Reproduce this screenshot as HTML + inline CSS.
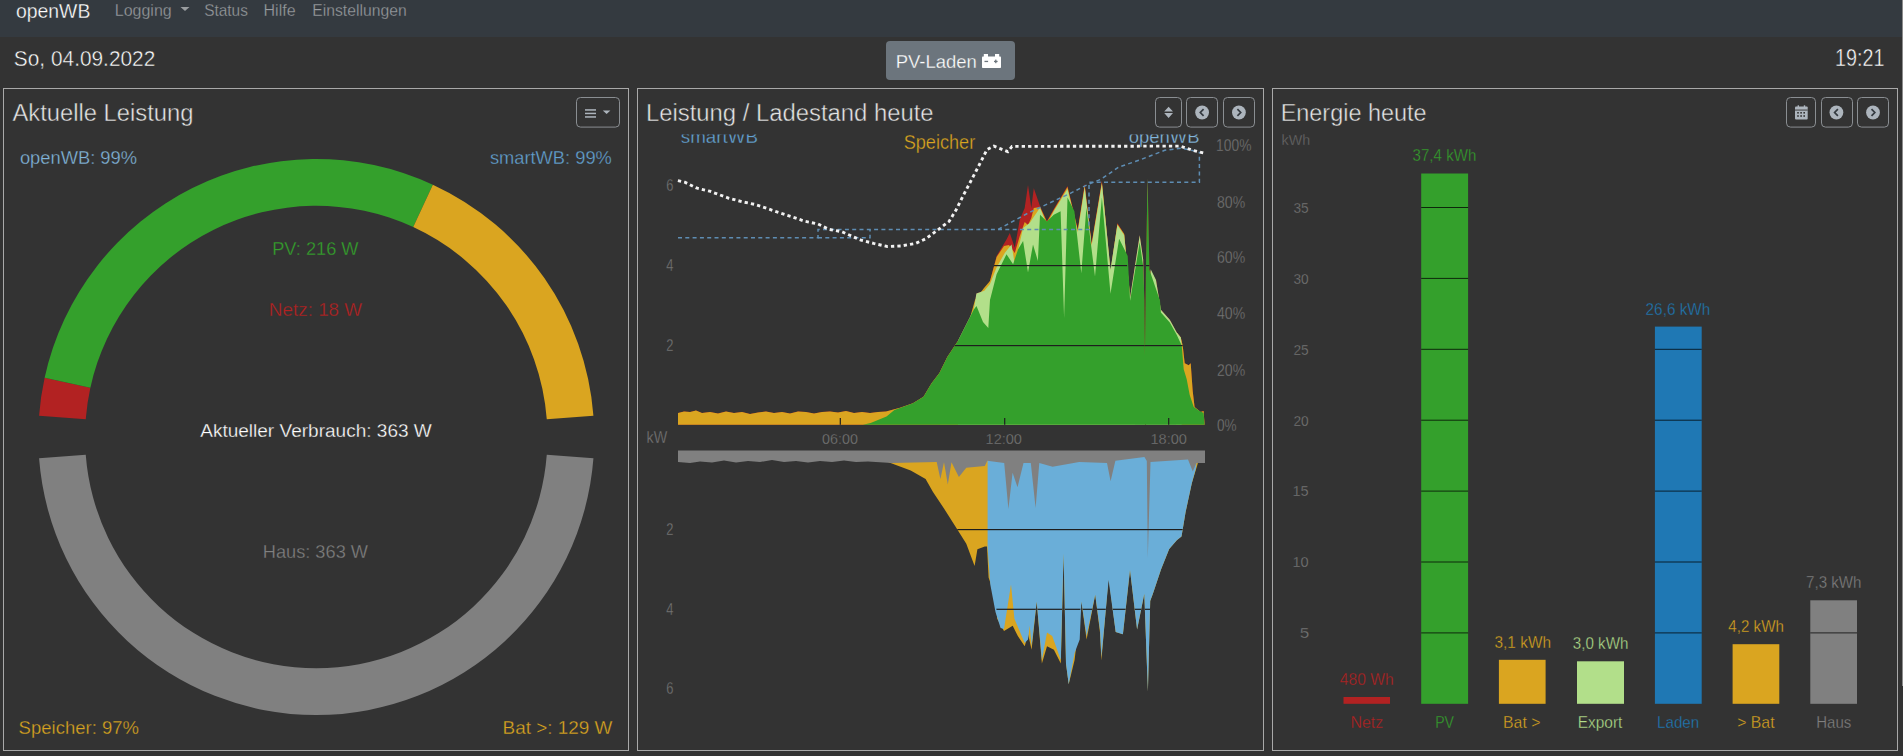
<!DOCTYPE html>
<html><head><meta charset="utf-8"><title>openWB</title>
<style>
html,body{margin:0;padding:0;background:#333333;width:1903px;height:756px;overflow:hidden;font-family:"Liberation Sans",sans-serif;}
svg{position:absolute;left:0;top:0;display:block}
text{font-family:"Liberation Sans",sans-serif;white-space:pre}
</style></head><body>
<svg width="1903" height="756" viewBox="0 0 1903 756">
<defs><clipPath id="c19"><rect x="0" y="134.5" width="1903" height="40"/></clipPath>
<clipPath id="c20"><rect x="0" y="134.5" width="1903" height="40"/></clipPath></defs>
<rect x="0" y="0" width="1903" height="756" fill="#333333"/>
<rect x="0" y="0" width="1903" height="37" fill="#343a40"/>
<path d="M180.5,6.9 L189.5,6.9 L185,11.1 Z" fill="#9a9da0"/>
<rect x="886" y="41" width="129" height="39" rx="4" fill="#6c757d"/>
<g fill="#ffffff"><rect x="982" y="56.6" width="19" height="11.4" rx="0.8"/><rect x="983.8" y="54" width="4.2" height="3"/><rect x="995" y="54" width="4.2" height="3"/></g><g fill="#6c757d"><rect x="984.5" y="60.8" width="3.6" height="1.3"/><rect x="994" y="60.8" width="3.6" height="1.3"/><rect x="995.15" y="59.6" width="1.3" height="3.6"/></g>
<rect x="3.5" y="88.5" width="625" height="662" fill="none" stroke="#a9a9a9" stroke-width="1"/>
<rect x="637.5" y="88.5" width="626" height="662" fill="none" stroke="#a9a9a9" stroke-width="1"/>
<rect x="1272.5" y="88.5" width="625" height="662" fill="none" stroke="#a9a9a9" stroke-width="1"/>
<rect x="1902" y="0" width="1" height="686" fill="#8c8c8c"/>
<path d="M39.07,415.67 A278,278 0 0 1 44.63,377.78 L90.36,387.75 A231.2,231.2 0 0 0 85.73,419.26 Z" fill="#b22222"/>
<path d="M44.63,377.78 A278,278 0 0 1 432.86,184.64 L413.23,227.12 A231.2,231.2 0 0 0 90.36,387.75 Z" fill="#34a02c"/>
<path d="M432.86,184.64 A278,278 0 0 1 593.43,415.67 L546.77,419.26 A231.2,231.2 0 0 0 413.23,227.12 Z" fill="#daa520"/>
<path d="M39.07,458.33 A278,278 0 0 0 593.43,458.33 L546.77,454.74 A231.2,231.2 0 0 1 85.73,454.74 Z" fill="#808080"/>
<clipPath id="envclip"><polygon points="678.0,424.8 678.0,413.0 684.0,411.5 690.0,412.0 696.0,410.5 702.0,413.0 710.0,412.0 718.0,413.5 726.0,411.5 734.0,413.0 742.0,412.0 750.0,414.0 758.0,412.5 766.0,411.5 774.0,413.0 782.0,412.0 790.0,413.5 798.0,411.5 806.0,412.0 814.0,413.5 822.0,412.0 830.0,411.5 838.0,412.5 846.0,411.0 854.0,413.0 862.0,412.0 870.0,413.0 878.0,412.0 886.0,411.5 900.0,407.8 912.9,403.3 923.5,396.7 931.4,383.4 939.4,372.9 947.3,357.0 957.9,341.1 973.8,309.4 976.4,293.5 984.3,290.8 990.0,280.8 996.6,256.0 1006.5,239.5 1009.8,232.9 1014.8,247.7 1019.8,219.6 1024.7,208.0 1028.0,184.9 1031.3,208.0 1033.8,188.2 1040.0,206.0 1046.9,221.0 1053.8,209.0 1067.5,186.0 1077.8,229.0 1084.7,183.5 1091.6,243.0 1101.9,180.5 1110.5,273.0 1117.4,223.0 1124.2,234.0 1130.1,297.2 1139.7,235.3 1143.2,259.4 1144.4,300.0 1144.9,355.7 1145.6,300.0 1145.9,269.7 1147.6,178.6 1149.4,269.7 1151.0,272.0 1156.0,280.0 1160.9,309.8 1169.8,319.7 1176.8,332.6 1180.8,337.5 1182.7,345.5 1184.7,363.3 1188.7,365.3 1190.7,363.3 1192.7,391.1 1194.6,407.0 1200.6,412.0 1203.6,411.0 1204.6,424.8"/></clipPath>
<clipPath id="lenvclip"><polygon points="678.0,450.5 678.0,462.0 690.0,463.0 700.0,461.5 712.0,462.5 724.0,460.5 736.0,462.5 748.0,461.0 760.0,462.0 772.0,460.0 784.0,462.0 796.0,461.0 808.0,462.5 820.0,461.0 832.0,462.0 844.0,460.5 856.0,462.0 868.0,461.5 888.5,462.2 910.7,470.6 925.6,478.9 933.0,491.9 944.0,508.5 957.0,528.9 966.3,543.7 974.6,565.9 977.4,549.3 984.8,546.5 987.0,546.6 988.6,577.6 995.5,598.2 997.2,618.8 1004.0,630.9 1012.7,625.7 1017.8,636.0 1024.7,646.3 1028.1,634.3 1031.6,649.8 1036.7,601.6 1041.9,663.5 1047.0,646.3 1053.9,649.8 1060.8,663.5 1063.6,553.5 1066.0,663.5 1068.7,684.2 1074.6,660.1 1081.4,601.6 1086.6,639.5 1095.2,594.7 1100.0,632.6 1101.4,660.5 1108.6,577.1 1115.7,631.9 1122.9,634.3 1130.0,570.0 1137.1,629.5 1144.3,593.8 1147.9,691.4 1150.2,601.0 1152.8,594.0 1161.0,569.5 1169.2,549.0 1177.0,540.0 1181.5,536.6 1185.6,512.0 1191.8,483.3 1198.0,462.8 1205.0,462.0"/></clipPath>
<polygon points="678.0,424.8 678.0,413.0 684.0,411.5 690.0,412.0 696.0,410.5 702.0,413.0 710.0,412.0 718.0,413.5 726.0,411.5 734.0,413.0 742.0,412.0 750.0,414.0 758.0,412.5 766.0,411.5 774.0,413.0 782.0,412.0 790.0,413.5 798.0,411.5 806.0,412.0 814.0,413.5 822.0,412.0 830.0,411.5 838.0,412.5 846.0,411.0 854.0,413.0 862.0,412.0 870.0,413.0 878.0,412.0 886.0,411.5 900.0,407.8 912.9,403.3 923.5,396.7 931.4,383.4 939.4,372.9 947.3,357.0 957.9,341.1 973.8,309.4 976.4,293.5 984.3,290.8 990.0,280.8 996.6,256.0 1006.5,239.5 1009.8,232.9 1014.8,247.7 1019.8,219.6 1024.7,208.0 1028.0,184.9 1031.3,208.0 1033.8,188.2 1040.0,206.0 1046.9,221.0 1053.8,209.0 1067.5,186.0 1077.8,229.0 1084.7,183.5 1091.6,243.0 1101.9,180.5 1110.5,273.0 1117.4,223.0 1124.2,234.0 1130.1,297.2 1139.7,235.3 1143.2,259.4 1144.4,300.0 1144.9,355.7 1145.6,300.0 1145.9,269.7 1147.6,178.6 1149.4,269.7 1151.0,272.0 1156.0,280.0 1160.9,309.8 1169.8,319.7 1176.8,332.6 1180.8,337.5 1182.7,345.5 1184.7,363.3 1188.7,365.3 1190.7,363.3 1192.7,391.1 1194.6,407.0 1200.6,412.0 1203.6,411.0 1204.6,424.8" fill="#b22222" />
<polygon points="678.0,424.8 678.0,413.0 684.0,411.5 690.0,412.0 696.0,410.5 702.0,413.0 710.0,412.0 718.0,413.5 726.0,411.5 734.0,413.0 742.0,412.0 750.0,414.0 758.0,412.5 766.0,411.5 774.0,413.0 782.0,412.0 790.0,413.5 798.0,411.5 806.0,412.0 814.0,413.5 822.0,412.0 830.0,411.5 838.0,412.5 846.0,411.0 854.0,413.0 862.0,412.0 870.0,413.0 878.0,412.0 886.0,411.5 900.0,407.8 912.9,403.3 923.5,396.7 931.4,383.4 939.4,372.9 947.3,357.0 957.9,341.1 957.9,424.8" fill="#daa520" />
<polygon points="940.0,424.8 975.0,300.0 984.0,288.0 990.0,281.0 996.6,257.0 1004.0,246.0 1009.0,245.0 1014.8,253.0 1019.8,236.0 1024.7,222.0 1028.0,225.0 1031.3,218.0 1033.8,208.0 1040.0,207.0 1046.9,222.0 1053.8,210.0 1067.5,187.0 1077.8,230.0 1084.7,185.5 1091.6,244.0 1101.9,182.0 1110.5,271.0 1117.4,224.0 1124.2,234.0 1130.1,296.0 1135.0,424.8" fill="#daa520" />
<polygon points="1176.0,424.8 1176.8,332.6 1180.8,337.5 1182.7,345.5 1184.7,363.3 1188.7,365.3 1190.7,363.3 1192.7,391.1 1194.6,407.0 1200.6,412.0 1203.6,411.0 1204.6,424.8" fill="#daa520" />
<polygon points="957.9,424.8 957.9,341.1 973.8,309.4 976.4,293.5 984.3,290.8 990.0,284.0 996.6,267.6 1004.9,252.7 1011.5,244.4 1014.8,264.3 1023.1,227.9 1029.7,223.0 1033.0,218.0 1040.0,207.8 1046.9,225.0 1053.8,211.3 1067.5,188.9 1077.8,231.9 1084.7,187.2 1091.6,245.7 1101.9,183.8 1110.5,269.7 1117.4,225.0 1124.2,235.3 1130.1,297.2 1139.7,235.3 1143.2,259.4 1145.0,424.8" fill="#b2df8a" />
<polygon points="1146.0,424.8 1147.4,178.3 1148.7,300.0 1150.7,269.2 1156.0,280.0 1160.9,309.8 1169.8,319.7 1176.8,332.6 1180.8,337.5 1181.7,345.5 1181.7,424.8" fill="#b2df8a" />
<polygon points="863.0,424.8 870.6,423.0 886.5,416.5 894.4,409.9 912.9,403.3 923.5,396.7 931.4,383.4 939.4,372.9 947.3,357.0 957.9,341.1 973.8,309.4 976.5,306.0 983.0,322.0 988.3,328.0 990.0,300.0 996.6,274.2 1006.5,254.3 1013.1,264.3 1018.0,249.4 1023.1,241.1 1028.0,272.5 1033.0,244.4 1037.9,261.0 1040.0,214.7 1046.9,221.6 1053.8,214.7 1060.6,211.3 1064.1,317.9 1067.5,197.5 1074.4,211.3 1081.3,273.2 1086.4,207.8 1095.0,276.6 1101.9,197.5 1110.5,293.8 1119.1,238.8 1127.7,256.0 1130.1,300.7 1139.7,242.2 1143.2,266.3 1144.4,300.0 1144.9,355.7 1145.6,300.0 1145.9,269.7 1147.6,178.6 1149.4,269.7 1160.0,300.7 1160.9,312.5 1169.8,322.5 1176.8,335.0 1181.7,345.5 1183.7,369.3 1186.7,379.2 1189.7,395.1 1193.7,407.0 1199.6,411.0 1203.6,413.0 1204.6,424.8" fill="#34a02c" />
<g clip-path="url(#envclip)" fill="#1e1e1e"><rect x="678" y="265" width="527" height="1.2"/><rect x="678" y="345" width="527" height="1.2"/><rect x="839.7" y="418" width="1.2" height="7"/><rect x="1004.1" y="418" width="1.2" height="7"/><rect x="1168.1" y="418" width="1.2" height="7"/></g>
<polygon points="885.0,453.5 888.5,462.2 910.7,470.6 925.6,478.9 933.0,491.9 944.0,508.5 957.0,528.9 966.3,543.7 974.6,565.9 977.4,549.3 984.8,546.5 987.0,546.6 988.6,577.6 995.5,598.2 997.2,618.8 1004.0,630.9 1012.7,625.7 1017.8,636.0 1024.7,646.3 1028.1,634.3 1031.6,649.8 1036.7,601.6 1041.9,663.5 1047.0,646.3 1053.9,649.8 1060.8,663.5 1063.6,553.5 1066.0,663.5 1068.7,684.2 1074.6,660.1 1081.4,601.6 1086.6,639.5 1095.2,594.7 1100.0,632.6 1101.4,660.5 1108.6,577.1 1115.7,631.9 1122.9,634.3 1130.0,570.0 1137.1,629.5 1144.3,593.8 1147.9,691.4 1150.2,601.0 1152.8,594.0 1161.0,569.5 1169.2,549.0 1177.0,540.0 1181.5,536.6 1185.6,512.0 1191.8,483.3 1198.0,462.8 1205.0,462.0 1203.0,453.5" fill="#daa520" />
<polygon points="987.6,453.5 987.6,548.0 990.3,584.4 995.5,612.0 1000.6,628.0 1004.0,629.0 1011.0,584.4 1014.4,618.8 1024.7,643.0 1028.0,639.5 1029.8,625.7 1031.6,646.0 1036.7,601.6 1041.9,660.0 1047.0,632.6 1052.2,636.0 1060.8,660.0 1063.6,553.5 1066.0,663.5 1068.7,684.2 1074.6,653.0 1079.7,639.5 1081.4,601.6 1086.6,636.0 1095.2,594.7 1100.0,630.0 1101.4,657.0 1108.6,580.0 1115.7,631.9 1122.9,634.3 1130.0,570.0 1137.1,629.5 1144.3,593.8 1147.9,691.4 1150.2,601.0 1152.8,594.0 1161.0,569.5 1169.2,549.0 1177.0,540.0 1181.5,536.6 1185.6,512.0 1191.8,483.3 1196.0,468.0 1197.0,453.5" fill="#6aaed8" />
<polygon points="678.0,450.5 1205.0,450.5 1205.0,463.1 1196.4,463.0 1192.8,471.6 1188.0,459.5 1150.5,461.9 1147.8,558.0 1146.8,461.0 1144.4,457.1 1115.4,460.7 1110.6,481.3 1107.0,463.1 1079.2,461.9 1052.6,466.8 1039.3,463.1 1035.6,507.9 1030.8,463.1 1023.5,463.1 1017.5,487.3 1012.6,472.8 1008.4,509.0 1004.2,463.1 987.3,460.7 984.8,466.0 966.3,467.8 958.9,477.0 951.5,462.2 947.8,484.4 944.0,462.2 940.4,478.9 936.7,461.9 892.0,463.0 868.0,461.5 856.0,462.0 844.0,460.5 832.0,462.0 820.0,461.0 808.0,462.5 796.0,461.0 784.0,462.0 772.0,460.0 760.0,462.0 748.0,461.0 736.0,462.5 724.0,460.5 712.0,462.5 700.0,461.5 690.0,463.0 678.0,462.0" fill="#808080" />
<g clip-path="url(#lenvclip)" fill="#1e1e1e"><rect x="678" y="529" width="527" height="1.2"/><rect x="678" y="608.7" width="527" height="1.2"/></g>
<polyline points="678.0,237.8 818.0,237.8 818.0,229.5 998.0,229.5 1028.6,212.8 1070.3,193.3 1088.3,184.3 1100.8,179.4 1118.9,167.0 1139.7,160.0 1164.7,150.3 1181.4,148.2 1198.0,151.7" fill="none" stroke="#5e8db3" stroke-width="1.5" stroke-dasharray="4 3.3"/>
<path d="M818,237.8 H870 V229.5 M998,229.5 H1089 V182.2 H1199.4 V151.7" fill="none" stroke="#5e8db3" stroke-width="1.5" stroke-dasharray="4 3.3"/>
<polyline points="677.9,180.6 684.8,182.2 696.5,188.0 709.7,191.2 715.5,193.3 728.2,198.0 742.0,201.7 754.7,204.4 767.4,208.6 780.0,212.9 792.8,217.1 804.9,221.3 818.1,224.0 828.7,229.3 842.0,231.8 861.0,240.2 873.6,243.4 887.2,246.5 900.9,246.0 915.6,243.4 926.1,238.6 936.6,230.8 949.2,221.3 956.0,210.0 962.9,196.2 975.6,172.0 987.0,149.5 993.9,146.1 1000.8,148.9 1007.8,151.7 1012.0,146.4 1180.0,146.1 1192.5,150.3 1203.6,153.0" fill="none" stroke="#f2f2f2" stroke-width="2.9" stroke-dasharray="3.3 3.1"/>
<rect x="1343.5" y="697.0" width="46.5" height="6.8" fill="#b22222"/>
<rect x="1421.2" y="173.5" width="46.9" height="530.3" fill="#34a02c"/>
<rect x="1421.2" y="632.4" width="46.9" height="1" fill="#000" fill-opacity="0.75"/>
<rect x="1421.2" y="561.5" width="46.9" height="1" fill="#000" fill-opacity="0.75"/>
<rect x="1421.2" y="490.6" width="46.9" height="1" fill="#000" fill-opacity="0.75"/>
<rect x="1421.2" y="419.7" width="46.9" height="1" fill="#000" fill-opacity="0.75"/>
<rect x="1421.2" y="348.8" width="46.9" height="1" fill="#000" fill-opacity="0.75"/>
<rect x="1421.2" y="277.9" width="46.9" height="1" fill="#000" fill-opacity="0.75"/>
<rect x="1421.2" y="207.0" width="46.9" height="1" fill="#000" fill-opacity="0.75"/>
<rect x="1498.9" y="659.8" width="46.7" height="44.0" fill="#daa520"/>
<rect x="1577.0" y="661.3" width="47.0" height="42.5" fill="#b2df8a"/>
<rect x="1654.9" y="326.6" width="46.8" height="377.2" fill="#1f78b4"/>
<rect x="1654.9" y="632.4" width="46.8" height="1" fill="#000" fill-opacity="0.75"/>
<rect x="1654.9" y="561.5" width="46.8" height="1" fill="#000" fill-opacity="0.75"/>
<rect x="1654.9" y="490.6" width="46.8" height="1" fill="#000" fill-opacity="0.75"/>
<rect x="1654.9" y="419.7" width="46.8" height="1" fill="#000" fill-opacity="0.75"/>
<rect x="1654.9" y="348.8" width="46.8" height="1" fill="#000" fill-opacity="0.75"/>
<rect x="1732.6" y="644.2" width="46.7" height="59.6" fill="#daa520"/>
<rect x="1810.3" y="600.3" width="46.7" height="103.5" fill="#808080"/>
<rect x="1810.3" y="632.4" width="46.7" height="1" fill="#000" fill-opacity="0.75"/>
<rect x="576.5" y="97.5" width="43.0" height="29.6" rx="4" fill="none" stroke="#8a8e92" stroke-width="1"/>
<rect x="585" y="109.2" width="11" height="1.5" fill="#adb5bd"/><rect x="585" y="112.7" width="11" height="1.5" fill="#adb5bd"/><rect x="585" y="116.2" width="11" height="1.5" fill="#adb5bd"/><path d="M602.8,110.5 L610.4,110.5 L606.6,114 Z" fill="#adb5bd"/>
<rect x="1155.5" y="97.5" width="26.0" height="29.6" rx="4" fill="none" stroke="#8a8e92" stroke-width="1"/>
<rect x="1186.5" y="97.5" width="31.0" height="29.6" rx="4" fill="none" stroke="#8a8e92" stroke-width="1"/>
<rect x="1223.5" y="97.5" width="31.0" height="29.6" rx="4" fill="none" stroke="#8a8e92" stroke-width="1"/>
<path d="M1168.6,106.8 L1173,111.6 L1164.2,111.6 Z M1168.6,117.9 L1173,113.1 L1164.2,113.1 Z" fill="#adb5bd"/>
<circle cx="1202.1" cy="112.5" r="6.9" fill="#adb5bd"/><path d="M1203.6,109.2 L1200.3,112.5 L1203.6,115.8" fill="none" stroke="#343a40" stroke-width="1.7"/>
<circle cx="1238.9" cy="112.5" r="6.9" fill="#adb5bd"/><path d="M1237.4,109.2 L1240.7,112.5 L1237.4,115.8" fill="none" stroke="#343a40" stroke-width="1.7"/>
<rect x="1786.5" y="97.5" width="29.0" height="29.6" rx="4" fill="none" stroke="#8a8e92" stroke-width="1"/>
<rect x="1821.5" y="97.5" width="31.0" height="29.6" rx="4" fill="none" stroke="#8a8e92" stroke-width="1"/>
<rect x="1857.5" y="97.5" width="31.0" height="29.6" rx="4" fill="none" stroke="#8a8e92" stroke-width="1"/>
<rect x="1795" y="106.5" width="12.7" height="13" rx="1" fill="#adb5bd"/><rect x="1795" y="109.6" width="12.7" height="0.9" fill="#333"/><rect x="1797.2" y="112.0" width="1.6" height="1.6" fill="#333"/><rect x="1797.2" y="115.2" width="1.6" height="1.6" fill="#333"/><rect x="1800.3" y="112.0" width="1.6" height="1.6" fill="#333"/><rect x="1800.3" y="115.2" width="1.6" height="1.6" fill="#333"/><rect x="1803.4" y="112.0" width="1.6" height="1.6" fill="#333"/><rect x="1803.4" y="115.2" width="1.6" height="1.6" fill="#333"/><rect x="1797.6" y="105.3" width="1.4" height="2.5" fill="#adb5bd"/><rect x="1803.8" y="105.3" width="1.4" height="2.5" fill="#adb5bd"/>
<circle cx="1836.4" cy="112.5" r="6.9" fill="#adb5bd"/><path d="M1837.9,109.2 L1834.6,112.5 L1837.9,115.8" fill="none" stroke="#343a40" stroke-width="1.7"/>
<circle cx="1873" cy="112.5" r="6.9" fill="#adb5bd"/><path d="M1871.5,109.2 L1874.8,112.5 L1871.5,115.8" fill="none" stroke="#343a40" stroke-width="1.7"/>
<text x="15.90" y="17.70" font-size="19.42" fill="#ffffff" stroke="#343a40" stroke-width="0.30" textLength="74.44" lengthAdjust="spacingAndGlyphs">openWB</text>
<text x="114.72" y="15.80" font-size="16.38" fill="#9a9da0" stroke="#343a40" stroke-width="0.30" textLength="57.01" lengthAdjust="spacingAndGlyphs">Logging</text>
<text x="204.16" y="15.80" font-size="16.38" fill="#9a9da0" stroke="#343a40" stroke-width="0.30" textLength="43.71" lengthAdjust="spacingAndGlyphs">Status</text>
<text x="263.52" y="15.80" font-size="16.38" fill="#9a9da0" stroke="#343a40" stroke-width="0.30" textLength="32.12" lengthAdjust="spacingAndGlyphs">Hilfe</text>
<text x="312.24" y="15.80" font-size="16.38" fill="#9a9da0" stroke="#343a40" stroke-width="0.30" textLength="94.39" lengthAdjust="spacingAndGlyphs">Einstellungen</text>
<text x="13.86" y="65.60" font-size="22.17" fill="#ffffff" stroke="#333333" stroke-width="0.45" textLength="141.43" lengthAdjust="spacingAndGlyphs">So, 04.09.2022</text>
<text x="895.63" y="68.00" font-size="19.13" fill="#ffffff" stroke="#6c757d" stroke-width="0.30" textLength="81.29" lengthAdjust="spacingAndGlyphs">PV-Laden</text>
<text x="1835.05" y="65.90" font-size="23.19" fill="#ffffff" stroke="#333333" stroke-width="0.45" textLength="49.33" lengthAdjust="spacingAndGlyphs">19:21</text>
<text x="12.40" y="121.20" font-size="24.64" fill="#e6e6e6" stroke="#333333" stroke-width="0.45" textLength="181.11" lengthAdjust="spacingAndGlyphs">Aktuelle Leistung</text>
<text x="19.90" y="163.90" font-size="18.12" fill="#82b6dc" stroke="#333333" stroke-width="0.30" textLength="117.18" lengthAdjust="spacingAndGlyphs">openWB: 99%</text>
<text x="489.90" y="163.90" font-size="18.12" fill="#64a2d2" stroke="#333333" stroke-width="0.30" textLength="121.96" lengthAdjust="spacingAndGlyphs">smartWB: 99%</text>
<text x="272.23" y="255.10" font-size="18.84" fill="#34a02c" stroke="#333333" stroke-width="0.30" textLength="86.29" lengthAdjust="spacingAndGlyphs">PV: 216 W</text>
<text x="268.88" y="316.00" font-size="18.55" fill="#b22222" stroke="#333333" stroke-width="0.30" textLength="93.27" lengthAdjust="spacingAndGlyphs">Netz: 18 W</text>
<text x="200.20" y="436.90" font-size="18.99" fill="#ffffff" stroke="#333333" stroke-width="0.30" textLength="231.61" lengthAdjust="spacingAndGlyphs">Aktueller Verbrauch: 363 W</text>
<text x="262.72" y="557.70" font-size="18.55" fill="#808080" stroke="#333333" stroke-width="0.30" textLength="105.32" lengthAdjust="spacingAndGlyphs">Haus: 363 W</text>
<text x="18.61" y="733.90" font-size="18.7" fill="#daa520" stroke="#333333" stroke-width="0.30" textLength="120.33" lengthAdjust="spacingAndGlyphs">Speicher: 97%</text>
<text x="502.59" y="733.90" font-size="18.7" fill="#daa520" stroke="#333333" stroke-width="0.30" textLength="109.87" lengthAdjust="spacingAndGlyphs">Bat &gt;: 129 W</text>
<text x="645.94" y="120.90" font-size="24.35" fill="#e6e6e6" stroke="#333333" stroke-width="0.45" textLength="287.66" lengthAdjust="spacingAndGlyphs">Leistung / Ladestand heute</text>
<text x="903.67" y="149.30" font-size="19.42" fill="#daa520" stroke="#333333" stroke-width="0.30" textLength="71.55" lengthAdjust="spacingAndGlyphs">Speicher</text>
<text x="680.82" y="142.80" font-size="19.13" fill="#64a2d2" stroke="#333333" stroke-width="0.30" textLength="77.13" lengthAdjust="spacingAndGlyphs" clip-path="url(#c19)">smartWB</text>
<text x="1128.80" y="143.30" font-size="19.13" fill="#82b6dc" stroke="#333333" stroke-width="0.30" textLength="70.69" lengthAdjust="spacingAndGlyphs" clip-path="url(#c20)">openWB</text>
<text x="1216.12" y="151.20" font-size="15.65" fill="#777777" stroke="#333333" stroke-width="0.30" textLength="35.30" lengthAdjust="spacingAndGlyphs">100%</text>
<text x="1217.00" y="207.60" font-size="15.65" fill="#777777" stroke="#333333" stroke-width="0.30" textLength="28.18" lengthAdjust="spacingAndGlyphs">80%</text>
<text x="1217.00" y="263.40" font-size="15.65" fill="#777777" stroke="#333333" stroke-width="0.30" textLength="28.18" lengthAdjust="spacingAndGlyphs">60%</text>
<text x="1217.00" y="319.30" font-size="15.65" fill="#777777" stroke="#333333" stroke-width="0.30" textLength="28.18" lengthAdjust="spacingAndGlyphs">40%</text>
<text x="1217.00" y="375.50" font-size="15.65" fill="#777777" stroke="#333333" stroke-width="0.30" textLength="28.18" lengthAdjust="spacingAndGlyphs">20%</text>
<text x="1217.00" y="430.70" font-size="15.65" fill="#777777" stroke="#333333" stroke-width="0.30" textLength="19.66" lengthAdjust="spacingAndGlyphs">0%</text>
<text x="666.30" y="191.20" font-size="15.94" fill="#777777" stroke="#333333" stroke-width="0.30" textLength="7.20" lengthAdjust="spacingAndGlyphs">6</text>
<text x="666.30" y="271.20" font-size="15.94" fill="#777777" stroke="#333333" stroke-width="0.30" textLength="7.20" lengthAdjust="spacingAndGlyphs">4</text>
<text x="666.30" y="351.00" font-size="15.94" fill="#777777" stroke="#333333" stroke-width="0.30" textLength="7.20" lengthAdjust="spacingAndGlyphs">2</text>
<text x="666.30" y="534.80" font-size="15.94" fill="#777777" stroke="#333333" stroke-width="0.30" textLength="7.20" lengthAdjust="spacingAndGlyphs">2</text>
<text x="666.30" y="614.80" font-size="15.94" fill="#777777" stroke="#333333" stroke-width="0.30" textLength="7.20" lengthAdjust="spacingAndGlyphs">4</text>
<text x="666.30" y="694.10" font-size="15.94" fill="#777777" stroke="#333333" stroke-width="0.30" textLength="7.20" lengthAdjust="spacingAndGlyphs">6</text>
<text x="646.50" y="443.10" font-size="15.94" fill="#777777" stroke="#333333" stroke-width="0.30" textLength="20.71" lengthAdjust="spacingAndGlyphs">kW</text>
<text x="822.00" y="444.10" font-size="15.22" fill="#777777" stroke="#333333" stroke-width="0.30" textLength="35.89" lengthAdjust="spacingAndGlyphs">06:00</text>
<text x="985.54" y="444.10" font-size="15.22" fill="#777777" stroke="#333333" stroke-width="0.30" textLength="36.45" lengthAdjust="spacingAndGlyphs">12:00</text>
<text x="1150.44" y="444.10" font-size="15.22" fill="#777777" stroke="#333333" stroke-width="0.30" textLength="36.45" lengthAdjust="spacingAndGlyphs">18:00</text>
<text x="1280.68" y="121.00" font-size="24.35" fill="#e6e6e6" stroke="#333333" stroke-width="0.45" textLength="145.90" lengthAdjust="spacingAndGlyphs">Energie heute</text>
<text x="1281.61" y="145.40" font-size="14.49" fill="#6a6a6a" stroke="#333333" stroke-width="0.30" textLength="28.67" lengthAdjust="spacingAndGlyphs">kWh</text>
<text x="1293.40" y="212.80" font-size="15.36" fill="#777777" stroke="#333333" stroke-width="0.30" textLength="15.28" lengthAdjust="spacingAndGlyphs">35</text>
<text x="1293.40" y="283.70" font-size="15.36" fill="#777777" stroke="#333333" stroke-width="0.30" textLength="15.28" lengthAdjust="spacingAndGlyphs">30</text>
<text x="1293.40" y="354.60" font-size="15.36" fill="#777777" stroke="#333333" stroke-width="0.30" textLength="15.28" lengthAdjust="spacingAndGlyphs">25</text>
<text x="1293.40" y="425.50" font-size="15.36" fill="#777777" stroke="#333333" stroke-width="0.30" textLength="15.28" lengthAdjust="spacingAndGlyphs">20</text>
<text x="1292.45" y="496.40" font-size="15.36" fill="#777777" stroke="#333333" stroke-width="0.30" textLength="16.24" lengthAdjust="spacingAndGlyphs">15</text>
<text x="1292.45" y="567.30" font-size="15.36" fill="#777777" stroke="#333333" stroke-width="0.30" textLength="16.24" lengthAdjust="spacingAndGlyphs">10</text>
<text x="1299.69" y="638.20" font-size="15.36" fill="#777777" stroke="#333333" stroke-width="0.30" textLength="9.52" lengthAdjust="spacingAndGlyphs">5</text>
<text x="1339.80" y="684.99" font-size="15.94" fill="#b22222" stroke="#333333" stroke-width="0.30" textLength="53.82" lengthAdjust="spacingAndGlyphs">480 Wh</text>
<text x="1350.42" y="728.00" font-size="16.38" fill="#b22222" stroke="#333333" stroke-width="0.30" textLength="32.90" lengthAdjust="spacingAndGlyphs">Netz</text>
<text x="1412.60" y="161.47" font-size="15.94" fill="#34a02c" stroke="#333333" stroke-width="0.30" textLength="63.71" lengthAdjust="spacingAndGlyphs">37,4 kWh</text>
<text x="1435.14" y="728.00" font-size="16.38" fill="#34a02c" stroke="#333333" stroke-width="0.30" textLength="18.81" lengthAdjust="spacingAndGlyphs">PV</text>
<text x="1494.50" y="647.84" font-size="15.94" fill="#daa520" stroke="#333333" stroke-width="0.30" textLength="56.55" lengthAdjust="spacingAndGlyphs">3,1 kWh</text>
<text x="1503.03" y="728.00" font-size="16.38" fill="#daa520" stroke="#333333" stroke-width="0.30" textLength="37.40" lengthAdjust="spacingAndGlyphs">Bat &gt;</text>
<text x="1572.80" y="649.26" font-size="15.94" fill="#b2df8a" stroke="#333333" stroke-width="0.30" textLength="55.65" lengthAdjust="spacingAndGlyphs">3,0 kWh</text>
<text x="1577.66" y="728.00" font-size="16.38" fill="#b2df8a" stroke="#333333" stroke-width="0.30" textLength="44.67" lengthAdjust="spacingAndGlyphs">Export</text>
<text x="1645.60" y="314.61" font-size="15.94" fill="#1f78b4" stroke="#333333" stroke-width="0.30" textLength="64.72" lengthAdjust="spacingAndGlyphs">26,6 kWh</text>
<text x="1657.07" y="728.00" font-size="16.38" fill="#1f78b4" stroke="#333333" stroke-width="0.30" textLength="42.19" lengthAdjust="spacingAndGlyphs">Laden</text>
<text x="1728.30" y="632.24" font-size="15.94" fill="#daa520" stroke="#333333" stroke-width="0.30" textLength="55.65" lengthAdjust="spacingAndGlyphs">4,2 kWh</text>
<text x="1737.23" y="728.00" font-size="16.38" fill="#daa520" stroke="#333333" stroke-width="0.30" textLength="37.33" lengthAdjust="spacingAndGlyphs">&gt; Bat</text>
<text x="1806.00" y="588.29" font-size="15.94" fill="#808080" stroke="#333333" stroke-width="0.30" textLength="55.55" lengthAdjust="spacingAndGlyphs">7,3 kWh</text>
<text x="1816.28" y="728.00" font-size="16.38" fill="#808080" stroke="#333333" stroke-width="0.30" textLength="35.11" lengthAdjust="spacingAndGlyphs">Haus</text>
</svg>
</body></html>
